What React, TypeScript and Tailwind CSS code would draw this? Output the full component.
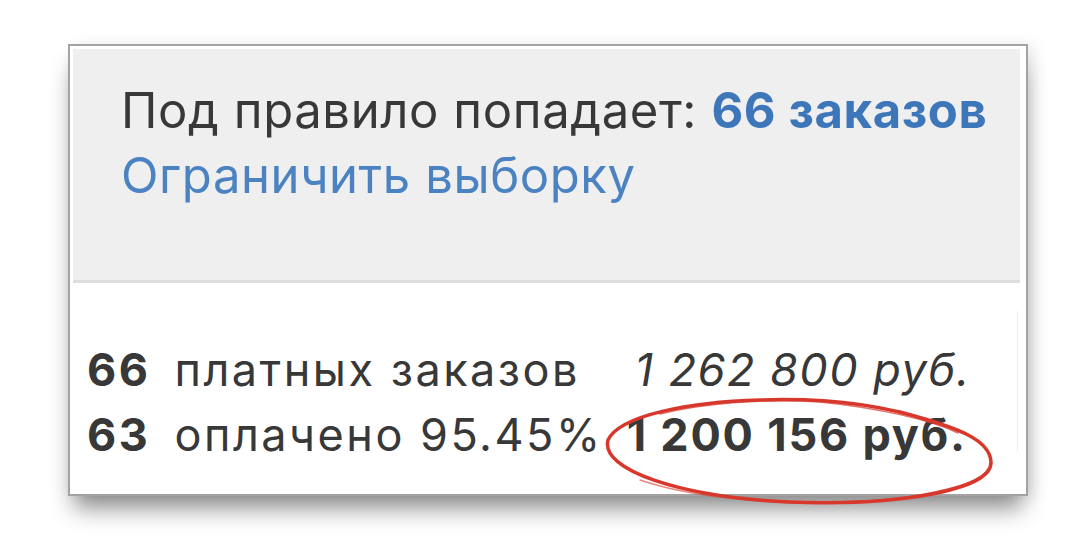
import React from "react";

export default function App() {
  return (
    <div className="w-[1080px] h-[542px] bg-white overflow-hidden font-['Inter','Noto_Sans',sans-serif] text-[#383838]">
      <div className="relative ml-[68px] mt-[44px] w-[960px] h-[452px] border-2 border-[#a3a3a3] bg-white p-[3px] pr-[6px] shadow-[0_18px_22px_-6px_rgba(0,0,0,0.45),6px_0_14px_rgba(0,0,0,0.08)]">
        <div className="h-[234px] bg-[#efefef] border-b-[3px] border-[#dddddd] pl-[48px] pt-[29px]">
          <p className="text-[49px] leading-[65px] tracking-[0.6px]">
            Под правило попадает:{" "}
            <span className="font-bold text-[#3d77b9]">66 заказов</span>
          </p>
          <p className="text-[49px] leading-[65px] tracking-[0.6px] text-[#4a82c2]">
            Ограничить выборку
          </p>
        </div>
        <div className="grid grid-cols-[auto_auto_1fr] gap-x-[24px] pl-[14px] pt-[54px] text-[45px] leading-[65px] tracking-[2.5px]">
          <span className="font-bold">66</span>
          <span>платных заказов</span>
          <span className="italic pl-[8px] tracking-[1.5px]">1 262 800 руб.</span>
          <span className="font-bold">63</span>
          <span>оплачено 95.45%</span>
          <span className="font-bold tracking-[1.8px]">1 200 156 руб.</span>
        </div>
        <div className="absolute right-[8px] top-[265px] w-px h-[140px] bg-[#ecebfa]" />
      </div>
      <svg
        className="absolute left-0 top-0 pointer-events-none"
        width="1080"
        height="542"
        viewBox="0 0 1080 542"
      >
        <g fill="none" stroke="#d8382c" strokeLinecap="round">
          <path
            d="M 930 421 C 880 404 820 398 760 400 C 690 402 620 415 608 440 C 600 470 680 497 790 502 C 900 506 992 490 991 462 C 990 440 960 428 900 412"
            strokeWidth="3.5"
          />
          <path
            d="M 958 433 C 930 420 880 408 820 402 C 760 398 700 404 660 414"
            strokeWidth="1.5"
            opacity="0.7"
          />
          <path
            d="M 640 480 C 690 497 760 503 820 503 C 900 502 960 490 985 475"
            strokeWidth="1.5"
            opacity="0.6"
          />
        </g>
      </svg>
    </div>
  );
}
